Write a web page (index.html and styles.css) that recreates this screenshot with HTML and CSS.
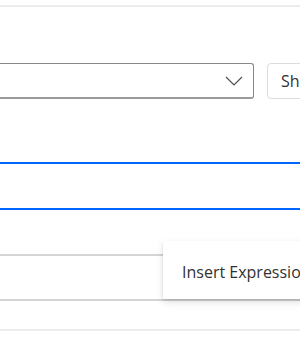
FILE: index.html
```html
<!DOCTYPE html>
<html lang="en">

<head>
    <meta charset="UTF-8">
    <meta name="viewport" content="width=device-width, initial-scale=1.0">
    <title>Expression Editor</title>
    <link rel="stylesheet" href="styles.css">
</head>

<body>
    <div class="page">
        <div class="divider"></div>

        <div class="field-row">
            <div class="select">
                <span class="select-value"></span>
                <svg class="chevron" width="18" height="10" viewBox="0 0 18 10">
                    <path d="M1 1 L9 9 L17 1" fill="none" stroke="#505050" stroke-width="1.2" />
                </svg>
            </div>
            <button class="show-btn">Show all</button>
        </div>

        <div class="expr-input"></div>

        <div class="grid">
            <div class="grid-row"></div>
            <div class="grid-row last"></div>
        </div>

        <!-- Context menu over the grid -->
        <div class="menu">
            <div class="menu-item">Insert Expression</div>
        </div>
    </div>
</body>

</html>
```

FILE: styles.css
```css
:root {
    --text-color: #323130;
    --blue: #0066ff;
    --line: #d4d4d4;
}

body {
    font-family: 'Open Sans', 'Noto Sans', sans-serif;
    color: var(--text-color);
    background: white;
    margin: 0;
    overflow: hidden;
}

.page {
    position: relative;
    height: 350px;
    margin-left: -20px;
    padding-top: 5px;
}

.divider {
    height: 2px;
    background: #ececec;
}

.field-row {
    display: flex;
    gap: 13px;
    margin-top: 56px;
}

.select {
    width: 274px;
    height: 36px;
    flex-shrink: 0;
    box-sizing: border-box;
    border: 1px solid #8a8886;
    border-bottom-width: 2px;
    border-bottom-color: #9c9a98;
    border-radius: 3px;
    display: flex;
    align-items: center;
    justify-content: space-between;
    padding-right: 10px;
}

.chevron {
    margin-top: 1px;
}

.show-btn {
    height: 36px;
    flex-shrink: 0;
    border: 1px solid #dcdcdc;
    border-radius: 4px;
    background: white;
    font-family: inherit;
    font-size: 16px;
    color: var(--text-color);
    padding: 0 13px;
}

.expr-input {
    height: 44px;
    margin-top: 63px;
    border-top: 2px solid var(--blue);
    border-bottom: 2px solid var(--blue);
}

.grid {
    margin-top: 44px;
}

.grid-row {
    height: 43px;
    border-top: 2px solid var(--line);
}

.grid-row.last {
    height: 28px;
    border-bottom: 2px solid #ededed;
}

.menu {
    position: absolute;
    left: 183px;
    top: 241px;
    width: 180px;
    height: 58px;
    background: white;
    box-shadow: 0 3px 7px rgba(0, 0, 0, 0.13), 0 1px 2px rgba(0, 0, 0, 0.1);
    display: flex;
    align-items: center;
}

.menu-item {
    padding-left: 19px;
    padding-top: 3px;
    font-size: 16px;
    white-space: nowrap;
}
```
